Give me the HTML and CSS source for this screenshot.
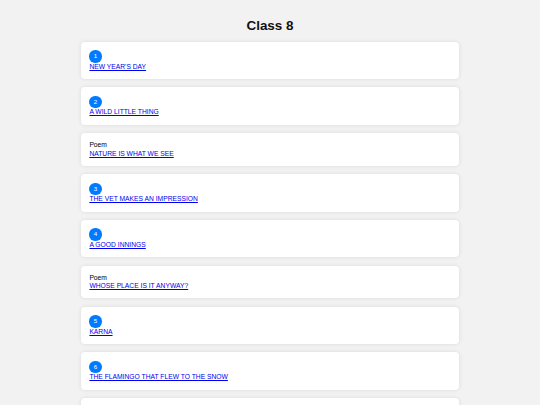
FILE: index.html
```html
<!DOCTYPE html>
<html>
<head>
  <title>Class 8</title>
  <link rel="stylesheet" href="styles.css">
</head>
<body>
  <h1 class="title">Class 8</h1>
  <div class="chapters">
    <div class="card">
      <div class="num">1</div>
      <a href="#">NEW YEAR'S DAY</a>
    </div>
    <div class="card">
      <div class="num">2</div>
      <a href="#">A WILD LITTLE THING</a>
    </div>
    <div class="card">
      <div class="kind">Poem</div>
      <a href="#">NATURE IS WHAT WE SEE</a>
    </div>
    <div class="card">
      <div class="num">3</div>
      <a href="#">THE VET MAKES AN IMPRESSION</a>
    </div>
    <div class="card">
      <div class="num">4</div>
      <a href="#">A GOOD INNINGS</a>
    </div>
    <div class="card">
      <div class="kind">Poem</div>
      <a href="#">WHOSE PLACE IS IT ANYWAY?</a>
    </div>
    <div class="card">
      <div class="num">5</div>
      <a href="#">KARNA</a>
    </div>
    <div class="card">
      <div class="num">6</div>
      <a href="#">THE FLAMINGO THAT FLEW TO THE SNOW</a>
    </div>
    <div class="card">
      <div class="kind">Poem</div>
      <a href="#">THE SONG OF THE RAIN</a>
    </div>
  </div>
</body>
</html>
```
FILE: styles.css
```css
body {
  margin: 0;
  padding: 18px 0 0;
  background-color: #f2f2f2;
  font-family: "Liberation Sans", Arial, sans-serif;
  font-size: 6.72px;
  line-height: 8.1px;
}
.title {
  margin: 0 0 8.4px;
  text-align: center;
  font-size: 13.44px;
  line-height: 15.5px;
  font-weight: bold;
  color: #111;
}
.chapters {
  display: flex;
  flex-direction: column;
  align-items: center;
  gap: 8.4px;
}
.card {
  width: 378px;
  box-sizing: border-box;
  padding: 8.4px;
  background-color: #fff;
  border-radius: 4px;
  box-shadow: 0 0 4px rgba(0, 0, 0, 0.1);
}
.num {
  width: 12.3px;
  height: 12.3px;
  border-radius: 50%;
  background-color: #007bff;
  color: #fff;
  font-size: 6.2px;
  line-height: 12.3px;
  text-align: center;
}
.kind {
  color: #000;
}
.card a {
  color: #0000ee;
}
```
